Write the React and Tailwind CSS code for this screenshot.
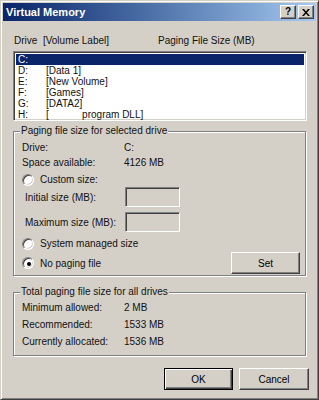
import React from "react";

const font = "font-['Liberation_Sans','Arial',sans-serif]";

function Radio({ checked }) {
  return (
    <span className="relative inline-block w-[12px] h-[12px] rounded-full bg-white border border-t-[#808080] border-l-[#808080] border-b-[#ffffff] border-r-[#ffffff] shadow-[inset_1px_1px_0_#404040,inset_-1px_-1px_0_#d4d0c8] shrink-0">
      {checked && (
        <span className="absolute left-[3.5px] top-[3.5px] w-[4px] h-[4px] rounded-full bg-black" />
      )}
    </span>
  );
}

function TextBox() {
  return (
    <div className="w-[55px] h-[20px] bg-[#d4d0c8] border border-t-[#808080] border-l-[#808080] border-b-white border-r-white shadow-[inset_1px_1px_0_#404040,inset_-1px_-1px_0_#d4d0c8]" />
  );
}

function Button({ children, w, isDefault }) {
  return (
    <div
      className={`flex items-center justify-center h-[22px] bg-[#d4d0c8] text-black border ${
        isDefault ? "border-black" : "border-t-white border-l-white border-b-[#404040] border-r-[#404040]"
      } ${
        isDefault
          ? "shadow-[inset_1px_1px_0_#fff,inset_-1px_-1px_0_#404040,inset_-2px_-2px_0_#808080]"
          : "shadow-[inset_-1px_-1px_0_#808080]"
      } ${w}`}
    >
      {children}
    </div>
  );
}

function Group({ label, children, className }) {
  return (
    <div
      className={`relative border border-[#808080] shadow-[inset_1px_1px_0_#fff,1px_1px_0_#fff] ${className}`}
    >
      <span className="absolute left-[6px] top-[-8px] bg-[#d4d0c8] px-[1px] leading-[14px] whitespace-nowrap">
        {label}
      </span>
      {children}
    </div>
  );
}

const drives = [
  ["C:", ""],
  ["D:", "[Data 1]"],
  ["E:", "[New Volume]"],
  ["F:", "[Games]"],
  ["G:", "[DATA2]"],
  ["H:", "[            program DLL]"],
];

export default function App() {
  return (
    <div
      className={`${font} w-[319px] h-[400px] bg-[#d4d0c8] text-[#111] text-[10px] border border-t-[#d4d0c8] border-l-[#d4d0c8] border-b-[#404040] border-r-[#404040] shadow-[inset_1px_1px_0_#fff,inset_-1px_-1px_0_#808080] p-[2px] flex flex-col overflow-hidden whitespace-nowrap`}
    >
      {/* Title bar */}
      <div className="h-[18px] flex items-center justify-between bg-gradient-to-r from-[#0a246a] to-[#a6caf0] pl-[3px] pr-[2px]">
        <span className="text-white font-bold text-[11px] leading-[13px]">Virtual Memory</span>
        <div className="flex gap-[2px]">
          <div className="w-[16px] h-[14px] flex items-center justify-center bg-[#d4d0c8] border border-t-white border-l-white border-b-[#404040] border-r-[#404040] shadow-[inset_-1px_-1px_0_#808080] text-[10px] font-bold leading-none text-black">
            ?
          </div>
          <div className="w-[16px] h-[14px] flex items-center justify-center bg-[#d4d0c8] border border-t-white border-l-white border-b-[#404040] border-r-[#404040] shadow-[inset_-1px_-1px_0_#808080]">
            <svg width="8" height="7" viewBox="0 0 8 7">
              <path d="M0 0h2l2 2.5L6 0h2L5 3.5 8 7H6L4 4.5 2 7H0l3-3.5z" fill="#000" />
            </svg>
          </div>
        </div>
      </div>

      <div className="flex flex-col pl-[10px] pr-[9px]">
        {/* header */}
        <div className="mt-[13px] h-[13px] leading-[13px] flex">
          <span className="w-[145px] pl-[1px]">Drive&nbsp;&nbsp;[Volume Label]</span>
          <span>Paging File Size (MB)</span>
        </div>

        {/* list */}
        <div className="mt-[4px] w-[294px] h-[70px] bg-white border border-t-[#808080] border-l-[#808080] border-b-white border-r-white shadow-[inset_1px_1px_0_#404040,inset_-1px_-1px_0_#d4d0c8] p-[2px] overflow-hidden">
          {drives.map(([d, l], i) => (
            <div
              key={d}
              className={`flex h-[11px] leading-[11px] pl-[2px] ${i === 0 ? "bg-[#0a246a] text-white" : ""}`}
            >
              <span className="w-[28px]">{d}</span>
              <span className="whitespace-pre">{l}</span>
            </div>
          ))}
        </div>

        {/* group 1 */}
        <Group label="Paging file size for selected drive" className="mt-[10px] w-[293px] h-[145px]">
          <div className="flex flex-col pl-[8px] pr-[5px] pt-[9px]">
            <div className="flex h-[13px] leading-[13px]">
              <span className="w-[102px]">Drive:</span>
              <span>C:</span>
            </div>
            <div className="flex h-[13px] leading-[13px] mt-[2px]">
              <span className="w-[102px]">Space available:</span>
              <span>4126 MB</span>
            </div>
            <div className="flex items-center h-[13px] mt-[4px]">
              <Radio />
              <span className="ml-[6px]">Custom size:</span>
            </div>
            <div className="flex items-center h-[20px] mt-[1px]">
              <span className="w-[103px] pl-[3px]">Initial size (MB):</span>
              <TextBox />
            </div>
            <div className="flex items-center h-[20px] mt-[5px]">
              <span className="w-[103px] pl-[3px]">Maximum size (MB):</span>
              <TextBox />
            </div>
            <div className="flex items-center h-[13px] mt-[5px]">
              <Radio />
              <span className="ml-[6px]">System managed size</span>
            </div>
            <div className="flex items-center justify-between h-[22px] mt-[2px]">
              <div className="flex items-center">
                <Radio checked />
                <span className="ml-[6px]">No paging file</span>
              </div>
              <Button w="w-[69px]">Set</Button>
            </div>
          </div>
        </Group>

        {/* group 2 */}
        <Group label="Total paging file size for all drives" className="mt-[16px] w-[293px] h-[64px]">
          <div className="flex flex-col pl-[8px] pt-[8px] gap-[4px]">
            <div className="flex h-[13px] leading-[13px]">
              <span className="w-[102px]">Minimum allowed:</span>
              <span>2 MB</span>
            </div>
            <div className="flex h-[13px] leading-[13px]">
              <span className="w-[102px]">Recommended:</span>
              <span>1533 MB</span>
            </div>
            <div className="flex h-[13px] leading-[13px]">
              <span className="w-[102px]">Currently allocated:</span>
              <span>1536 MB</span>
            </div>
          </div>
        </Group>

        {/* buttons */}
        <div className="mt-[12px] flex justify-end gap-[6px] w-[296px]">
          <Button w="w-[69px]" isDefault>OK</Button>
          <Button w="w-[70px]">Cancel</Button>
        </div>
      </div>
    </div>
  );
}
